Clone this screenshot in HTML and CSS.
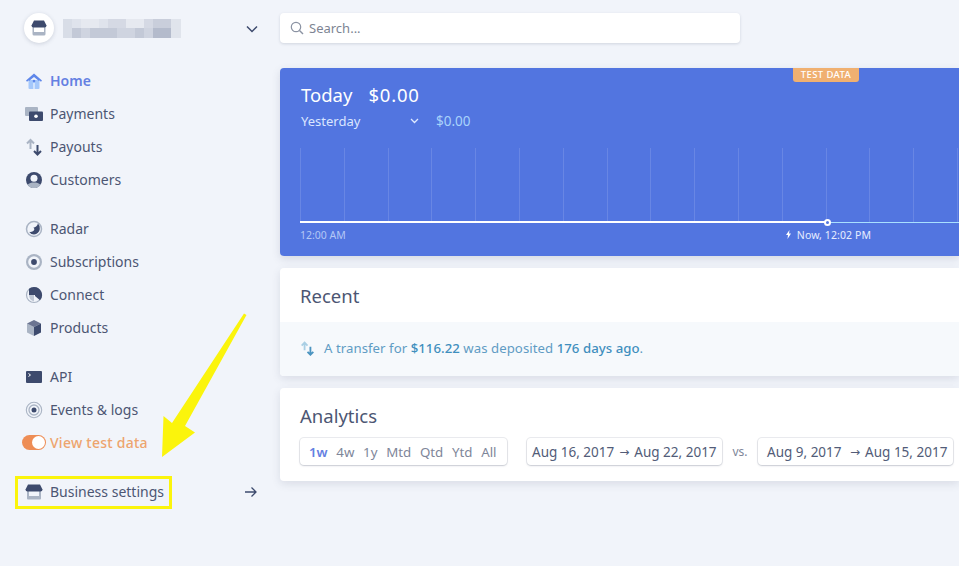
FILE: index.html
```html
<!DOCTYPE html>
<html lang="en">
<head>
    <meta charset="UTF-8">
    <meta name="viewport" content="width=device-width, initial-scale=1.0">
    <title>Dashboard</title>
    <link rel="stylesheet" href="styles.css">
</head>
<body>
    <aside class="sidebar">
        <div class="account">
            <span class="account-logo">
                <svg width="16" height="16" viewBox="0 0 16 16"><path fill="#aab4c4" d="M1.500 7h13v7a1.500 1.500 0 0 1-1.500 1.500H3A1.500 1.500 0 0 1 1.500 14z"/><path fill="#fff" d="M3 7h10v5H3z"/><path fill="#3d4a6d" d="M3 .5h10l2.500 5a2 2 0 0 1-2 2H2.500a2 2 0 0 1-2-2z"/></svg>
            </span>
            <svg class="account-name" width="118" height="19" viewBox="0 0 118 19">
                <path fill="#d8dde7" d="M0 0h9v9H0zM0 9h9v10H0z"/>
                <path fill="#dfe3ec" d="M9 0h9v9H9zM36 0h9v9h-9zM45 0h9v9h-9z"/>
                <path fill="#e6e9f0" d="M18 0h18v9H18zM63 0h18v9H63z"/>
                <path fill="#d5d9e4" d="M45 0h18v9H45zM81 0h9v9h-9zM90 0h9v9h-9z"/>
                <path fill="#c9cedb" d="M90 0h18v9H90z"/>
                <path fill="#e0e4ec" d="M108 0h10v9h-10zM108 9h10v10h-10z"/>
                <path fill="#c3c9d7" d="M9 9h9v10H9zM27 9h27v10H27zM72 9h18v10H72z"/>
                <path fill="#cfd4e0" d="M18 9h9v10h-9zM54 9h18v10H54zM81 9h9v10h-9z"/>
                <path fill="#b4bbcc" d="M90 9h18v10H90z"/>
            </svg>
            <svg class="chevron" width="12" height="8" viewBox="0 0 12 8"><path fill="none" stroke="#3d4a6d" stroke-width="1.500" d="M1 1.500l5 5 5-5"/></svg>
        </div>

        <nav class="nav-group">
            <a class="nav-item active">
                <svg width="18" height="18" viewBox="0 0 18 18"><path fill="#a5c8fb" d="M3.500 8h11v8a1 1 0 0 1-1 1h-9a1 1 0 0 1-1-1z"/><path fill="#5f87ea" d="M9 1.500L17 8.500l-1 1.200-1-.7-6-5-6 5-1 .7-1-1.200z"/><path fill="#5f87ea" d="M4 7l5-4 5 4v2l-5-4-5 4z"/><circle cx="9" cy="9" r="1.300" fill="#5f87ea"/><rect x="8" y="11" width="2" height="6" fill="#fff" opacity=".5"/></svg>
                Home
            </a>
            <a class="nav-item">
                <svg width="18" height="18" viewBox="0 0 18 18"><rect y="2" width="13" height="9" rx="1" fill="#aab4c4"/><rect x="4" y="6.500" width="14" height="9.500" rx="1" fill="#3d4a6d"/><circle cx="11" cy="11.200" r="1.800" fill="#fff"/></svg>
                Payments
            </a>
            <a class="nav-item">
                <svg width="18" height="18" viewBox="0 0 18 18"><path fill="none" stroke="#aab4c4" stroke-width="2" d="M5.500 11V2M2 5.500L5.500 2 9 5.500"/><path fill="none" stroke="#3d4a6d" stroke-width="2" d="M12.500 7v9.500M9 13l3.500 3.500L16 13"/></svg>
                Payouts
            </a>
            <a class="nav-item">
                <svg width="18" height="18" viewBox="0 0 18 18"><circle cx="9" cy="9" r="8" fill="#3d4a6d"/><path fill="#aab4c4" d="M2.500 13.700C4 12 6.500 11.500 9 11.500s5 .5 6.500 2.200A8 8 0 0 1 2.500 13.700z"/><circle cx="9" cy="7.300" r="3.500" fill="#f1f4fa"/></svg>
                Customers
            </a>
        </nav>

        <nav class="nav-group">
            <a class="nav-item">
                <svg width="18" height="18" viewBox="0 0 18 18"><circle cx="9" cy="9" r="7.500" fill="#f1f4fa" stroke="#aab4c4" stroke-width="1.500"/><path fill="#3d4a6d" d="M13 3.500a6.500 6.500 0 0 1 1.800 5.500 6 6 0 0 1-5.800 5.500 6 6 0 0 1-5-2.700C6 12.500 9 11.500 9.300 9.500 9.500 8.500 9 8 8.300 7.700c2-.3 4-1.700 4.700-4.200z"/></svg>
                Radar
            </a>
            <a class="nav-item">
                <svg width="18" height="18" viewBox="0 0 18 18"><circle cx="9" cy="9" r="8" fill="#aab4c4"/><circle cx="9" cy="9" r="5.800" fill="#f1f4fa"/><circle cx="9" cy="9" r="2.900" fill="#3d4a6d"/></svg>
                Subscriptions
            </a>
            <a class="nav-item">
                <svg width="18" height="18" viewBox="0 0 18 18"><circle cx="9" cy="9" r="7.500" fill="#f1f4fa" stroke="#aab4c4" stroke-width="1.200"/><path fill="#3d4a6d" d="M9 1a8 8 0 0 1 6 13.300L10 10V9H4V2.700A8 8 0 0 1 9 1z"/><path fill="#aab4c4" d="M4 9h5v6.500A7 7 0 0 1 4 9z" opacity=".7"/></svg>
                Connect
            </a>
            <a class="nav-item">
                <svg width="18" height="18" viewBox="0 0 18 18"><path fill="#3d4a6d" d="M9 8l7-3.500v9L9 17z"/><path fill="#aab4c4" d="M2 4.500L9 8v9l-7-3.500z"/><path fill="#3d4a6d" d="M2 4.500L9 1l7 3.500L9 8z" opacity=".75"/></svg>
                Products
            </a>
        </nav>

        <nav class="nav-group">
            <a class="nav-item">
                <svg width="18" height="18" viewBox="0 0 18 18"><rect x="1" y="3" width="16" height="12" rx="1" fill="#3d4a6d"/><path fill="none" stroke="#fff" stroke-width="1" d="M3.500 5.500l2 1.500-2 1.500"/></svg>
                API
            </a>
            <a class="nav-item">
                <svg width="18" height="18" viewBox="0 0 18 18"><circle cx="9" cy="9" r="7.700" fill="none" stroke="#aab4c4" stroke-width="1.100"/><circle cx="9" cy="9" r="5" fill="none" stroke="#aab4c4" stroke-width="1.300"/><circle cx="9" cy="9" r="2.500" fill="#3d4a6d"/></svg>
                Events &amp; logs
            </a>
            <a class="nav-item test-toggle">
                <span class="switch"><span class="switch-knob"></span></span>
                View test data
            </a>
        </nav>

        <nav class="nav-group">
            <a class="nav-item settings">
                <svg width="18" height="18" viewBox="0 0 18 18"><path fill="#aab4c4" d="M2 8h14v7.500a1 1 0 0 1-1 1H3a1 1 0 0 1-1-1z"/><path fill="#f1f4fa" d="M4 8h10v5H4z"/><path fill="#3d4a6d" d="M3 1.500h12l2.500 5a2 2 0 0 1-2 2h-13a2 2 0 0 1-2-2z"/></svg>
                Business settings
                <svg class="arrow" width="14" height="12" viewBox="0 0 14 12"><path fill="none" stroke="#3d4a6d" stroke-width="1.300" d="M1 6h11M7.500 1.500L12 6l-4.500 4.500"/></svg>
            </a>
        </nav>
    </aside>

    <main class="content">
        <div class="search">
            <svg width="14" height="14" viewBox="0 0 14 14"><circle cx="6" cy="6" r="4.700" fill="none" stroke="#8b93a3" stroke-width="1.200"/><path stroke="#8b93a3" stroke-width="1.400" d="M9.500 9.500l3.500 3.500"/></svg>
            <span>Search...</span>
        </div>

        <section class="today">
            <span class="badge">TEST DATA</span>
            <div class="today-head">
                <span>Today</span>
                <span class="today-total">$0.00</span>
            </div>
            <div class="today-compare">
                <span class="compare-label">Yesterday</span>
                <svg width="9" height="6" viewBox="0 0 9 6"><path fill="none" stroke="#dfe9ff" stroke-width="1.300" d="M1 1l3.500 3.500L8 1"/></svg>
                <span class="compare-value">$0.00</span>
            </div>
            <div class="chart">
                <div class="chart-grid">
                    <i></i><i></i><i></i><i></i><i></i><i></i><i></i><i></i>
                    <i></i><i></i><i></i><i></i><i></i><i></i><i></i><i></i>
                </div>
                <div class="chart-now"></div>
            </div>
            <div class="chart-labels">
                <span>12:00 AM</span>
                <span class="now-label">
                    <svg width="5" height="9" viewBox="0 0 5 9"><path fill="#fff" d="M3.500 0L0 5h2L1.500 9 5 3.500H3z"/></svg>
                    Now, 12:02 PM
                </span>
            </div>
        </section>

        <section class="card">
            <h2 class="card-title recent-title">Recent</h2>
            <div class="recent-row">
                <svg width="15" height="15" viewBox="0 0 18 18"><path fill="none" stroke="#a9cfe4" stroke-width="2.200" d="M5.500 11V2M2 5.500L5.500 2 9 5.500"/><path fill="none" stroke="#4b94c0" stroke-width="2.200" d="M12.500 7v9.500M9 13l3.500 3.500L16 13"/></svg>
                <span>A transfer for <b>$116.22</b> was deposited <b>176 days ago</b>.</span>
            </div>
        </section>

        <section class="card analytics">
            <h2 class="card-title">Analytics</h2>
            <div class="filters">
                <div class="pill ranges">
                    <span class="selected">1w</span><span>4w</span><span>1y</span><span>Mtd</span><span>Qtd</span><span>Ytd</span><span>All</span>
                </div>
                <div class="pill dates">Aug 16, 2017 <span class="to">→</span> Aug 22, 2017</div>
                <span class="vs">vs.</span>
                <div class="pill dates second">Aug 9, 2017 &nbsp;<span class="to">→</span> Aug 15, 2017</div>
            </div>
        </section>
    </main>

    <!-- annotation on top of the screenshot -->
    <svg class="callout-arrow" width="100" height="160" viewBox="0 0 100 160"><path fill="#fbf40c" d="M83 2.500L85.500 4 24 115l10 6.500-33 24.500 1.500-41 8.500 7z"/></svg>
    <div class="callout-box"></div>
</body>
</html>
```

FILE: styles.css
```css
body {
    display: flex;
    margin: 0;
    height: 566px;
    overflow: hidden;
    background-color: #f1f4fa;
    color: #4c5673;
    font-family: "Noto Sans", "Open Sans", sans-serif;
    font-size: 14px;
}

.sidebar {
    flex: none;
    width: 280px;
    padding: 13px 22px 0 0;
    box-sizing: border-box;
}

.account {
    display: flex;
    align-items: center;
    margin-left: 24px;
    margin-bottom: 21px;
}

.account-logo {
    display: flex;
    align-items: center;
    justify-content: center;
    width: 30px;
    height: 30px;
    border-radius: 50%;
    background-color: white;
    box-shadow: 0 1px 4px rgba(60, 70, 100, 0.2);
}

.account-name {
    margin-left: 9px;
}

.chevron {
    margin-left: auto;
    margin-top: 2px;
}

.nav-group {
    margin-bottom: 16px;
}

.nav-item {
    display: flex;
    align-items: center;
    height: 33px;
    padding-left: 25px;
}

.nav-item svg:first-child {
    margin-right: 7px;
}

.nav-item.active {
    color: #6480e2;
    font-weight: 600;
}

.test-toggle {
    padding-left: 22px;
    color: #eda46e;
    font-weight: 500;
    letter-spacing: 0.25px;
}

.switch {
    display: flex;
    justify-content: flex-end;
    width: 24px;
    height: 15px;
    margin-right: 4px;
    border-radius: 8px;
    background-color: #ee8d55;
}

.switch-knob {
    width: 13px;
    height: 13px;
    margin: 1px;
    border-radius: 50%;
    background-color: white;
}

.settings .arrow {
    margin-left: auto;
}

.content {
    flex: none;
    width: 679px;
    padding-top: 13px;
}

.search {
    display: flex;
    align-items: center;
    gap: 5px;
    width: 460px;
    height: 30px;
    padding-left: 10px;
    box-sizing: border-box;
    margin-bottom: 25px;
    border-radius: 4px;
    background-color: white;
    box-shadow: 0 1px 3px rgba(60, 70, 100, 0.18);
    color: #7d8493;
    font-size: 13px;
}

.today {
    position: relative;
    height: 188px;
    padding: 14px 0 0 21px;
    box-sizing: border-box;
    margin-bottom: 12px;
    border-radius: 4px 0 0 4px;
    background-color: #5275e0;
    box-shadow: 0 3px 8px rgba(60, 70, 100, 0.15);
    color: white;
}

.badge {
    position: absolute;
    top: 0;
    left: 513px;
    width: 66px;
    height: 14px;
    border-radius: 0 0 3px 3px;
    background-color: #f0b071;
    font-size: 9.500px;
    font-weight: 500;
    line-height: 14px;
    text-align: center;
    letter-spacing: 0.4px;
}

.today-head {
    display: flex;
    gap: 16px;
    font-size: 18.500px;
    line-height: 26px;
}

.today-total {
    letter-spacing: 0.8px;
}

.today-compare {
    display: flex;
    align-items: center;
    height: 26px;
    color: #dbe6ff;
    font-size: 13px;
}

.compare-label {
    width: 109px;
}

.compare-value {
    margin-left: 17px;
    color: #a9d3fb;
    font-size: 13.500px;
}

.chart {
    position: relative;
    height: 74px;
    margin: 14px 0 0 -1px;
    border-bottom: 1px solid #a9e0ff;
}

.chart-grid {
    display: flex;
    height: 74px;
}

.chart-grid i {
    flex: none;
    width: 42.800px;
    border-left: 1px solid rgba(255, 255, 255, 0.13);
}

.chart-grid i:last-child {
    width: 0;
}

.chart-now {
    position: absolute;
    left: 0;
    bottom: -1px;
    width: 527px;
    height: 2px;
    background-color: white;
}

.chart-now::after {
    content: "";
    position: absolute;
    right: -4px;
    top: -2.500px;
    width: 3px;
    height: 3px;
    border: 2px solid white;
    border-radius: 50%;
    background-color: #5275e0;
}

.chart-labels {
    position: relative;
    margin: 5px 0 0 -1px;
    color: #b4c7f5;
    font-size: 10.500px;
}

.now-label {
    position: absolute;
    left: 486px;
    top: 0;
    color: #e6edff;
    letter-spacing: 0.1px;
}

.now-label svg {
    margin-right: 3px;
}

.card {
    margin-bottom: 12px;
    border-radius: 4px 0 0 4px;
    background-color: white;
    box-shadow: 0 3px 8px rgba(60, 70, 100, 0.13);
}

.card-title {
    margin: 0;
    padding: 15px 20px 0;
    font-size: 18.500px;
    font-weight: 400;
    line-height: 26px;
}

.recent-title {
    height: 54px;
    box-sizing: border-box;
}

.recent-row {
    display: flex;
    align-items: center;
    gap: 9px;
    height: 54px;
    padding: 0 0 2px 20px;
    box-sizing: border-box;
    background-color: #f6f9fc;
    color: #5f9cc4;
    font-size: 13.200px;
    letter-spacing: 0.05px;
    border-radius: 0 0 0 4px;
}

.recent-row b {
    color: #3f8fbe;
    font-weight: 500;
}

.analytics {
    height: 93px;
    margin-bottom: 0;
}

.analytics .card-title {
    padding-top: 15px;
}

.filters {
    display: flex;
    align-items: center;
    margin: 9px 0 0 20px;
    white-space: nowrap;
}

.pill {
    display: flex;
    align-items: center;
    height: 27px;
    box-sizing: border-box;
    border-radius: 4px;
    background-color: white;
    box-shadow: 0 0 0 1px rgba(60, 70, 100, 0.1), 0 1px 2px rgba(60, 70, 100, 0.2);
    font-size: 13.300px;
}

.ranges {
    gap: 8.700px;
    width: 207px;
    padding-left: 9px;
    margin-right: 20px;
    color: #7e8699;
}

.ranges .selected {
    color: #6480e2;
    font-weight: 600;
}

.dates {
    width: 195px;
    padding-left: 5px;
    color: #525c78;
    font-size: 13.500px;
    white-space: pre;
}

.dates .to {
    margin: 0 1.500px;
    font-family: "DejaVu Sans", sans-serif;
    font-size: 12px;
}

.dates.second {
    padding-left: 9px;
}

.vs {
    width: 36px;
    color: #7e8699;
    font-size: 12px;
    text-align: center;
}

/* annotation */
.callout-arrow {
    position: absolute;
    left: 161px;
    top: 311px;
}

.callout-box {
    position: absolute;
    left: 15px;
    top: 476px;
    width: 151px;
    height: 27px;
    border: 3px solid #fbf40c;
}
```
